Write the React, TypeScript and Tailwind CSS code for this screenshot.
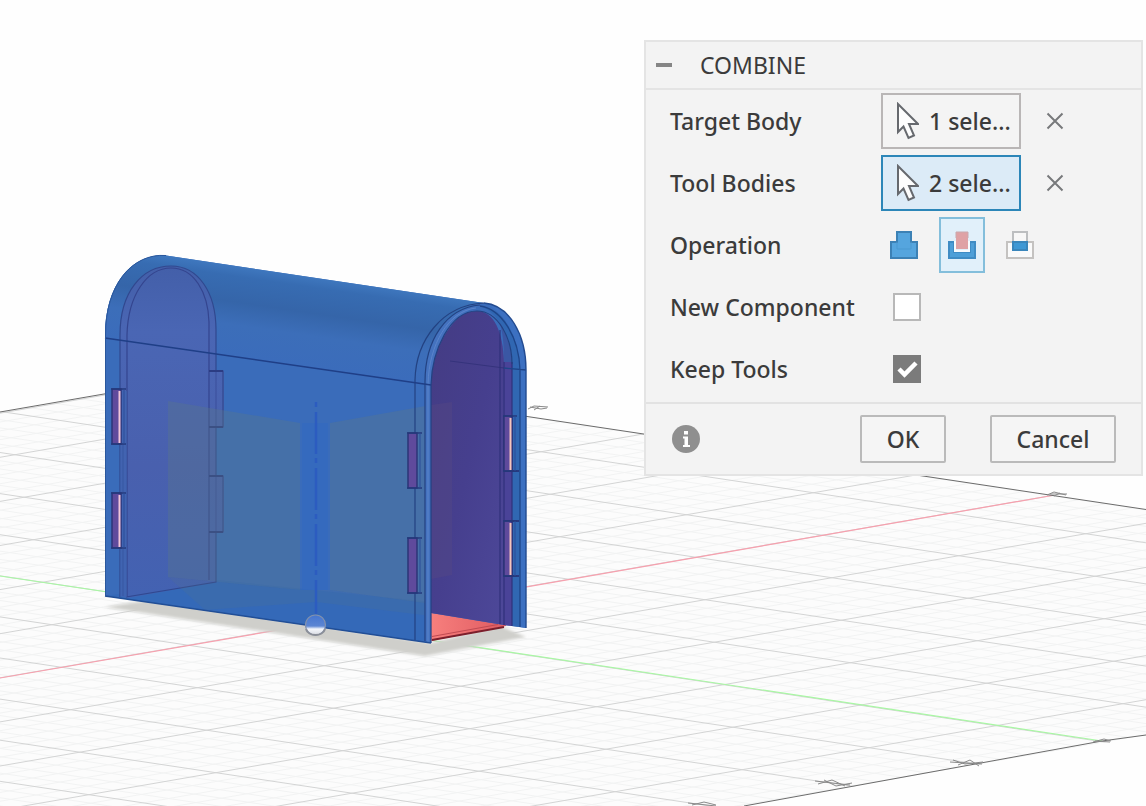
import { useState } from 'react'

const GRID = [-20, -19, -18, -17, -16, -15, -14, -13, -12, -11, -10, -9, -8, -7, -6, -5, -4, -3, -2, -1, 0, 1, 2, 3, 4, 5, 6, 7, 8, 9, 10, 11, 12]

// y of each grid line where it meets x = 0
const falling = (k: number) => 575.8 + 41.1 * k
const rising = (k: number) => 677.8 + 44.1 * k
const FALL = 172.5
const RISE = -198.6

function Grid() {
  return (
    <g clipPath="url(#floor)">
      <path d="M0 412 231 372 1146 509.5V735L744 806H0Z" fill="#fcfcfc" />
      <g stroke="#f2f3f3" strokeWidth="1">
        {GRID.map(k => [0.2, 0.4, 0.6, 0.8].map(f => (
          <g key={k + f}>
            <line x1="0" y1={falling(k + f)} x2="1146" y2={falling(k + f) + FALL} />
            <line x1="0" y1={rising(k + f)} x2="1146" y2={rising(k + f) + RISE} />
          </g>
        )))}
      </g>
      <g stroke="#d3d4d4" strokeWidth="1">
        {GRID.map(k => (
          <g key={k}>
            <line x1="0" y1={falling(k)} x2="1146" y2={falling(k) + FALL} />
            <line x1="0" y1={rising(k)} x2="1146" y2={rising(k) + RISE} />
          </g>
        ))}
      </g>
      <path d="M0 576 316 623 1102 741" stroke="#a9f7a4" strokeWidth="1.2" fill="none" />
      <path d="M0 678 316 623.5 1055 495" stroke="#f7a0ae" strokeWidth="1.2" fill="none" />
    </g>
  )
}

function Slot({ x, y, w = 9, h = 55, glow }: { x: number; y: number; w?: number; h?: number; glow?: string }) {
  return (
    <g>
      <rect x={x} y={y} width={w} height={h} fill="#5f4a9c" stroke="#2a3275" strokeWidth="1.4" />
      {glow && <path d={`M${x + w - 1.5} ${y + 2}v${h - 3}`} stroke={glow} strokeWidth="2" />}
      <path d={`M${x - 1} ${y}h${w + 6}M${x - 1} ${y + h}h${w + 6}`} stroke="#243a7c" strokeWidth="1.6" />
      <path d={`M${x + w + 3} ${y}v${h}`} stroke="#2b4d97" strokeWidth="1" />
    </g>
  )
}

function Model() {
  return (
    <g fill="none">
      <path d="M105 607 150 600 431 643 500 626 526 637 425 656Z" fill="#cfcfcb" filter="url(#soft)" />
      <path d="M431 612 506 622 506 626 431 641Z" fill="url(#pink)" />
      <path d="M432 640 504 627" stroke="#7c1f2c" strokeWidth="1.8" />
      <path d="M432 636.500 498 624.500" stroke="#c04a52" strokeWidth="1" />

      {/* shell */}
      <path d="M105 596V335C105 285 132 253 166 255.5L484 303C509 305 526 334 526 370V628L504 625 431 613V643Z" fill="#3a6cba" />
      <path d="M105 338V335C105 285 132 253 166 255.5L484 303C450 305 431 340 431 385Z" fill="url(#roof)" />
      <path d="M105 596 216 580 431 602V643Z" fill="#3168b8" opacity=".6" />

      {/* far end plate */}
      <path d="M120 596V335C120 292 142 266 170 266 197 266 214 290 216 325V371H224V427H216V476H224V532H216V582L128 598Z" fill="url(#plate)" />
      <path d="M120 390V335C120 292 142 266 171 266 198 266 216 292 216 330V371H223V427H209M216 427V476H223V532H209M216 532V582L126 597" stroke="#31488f" strokeWidth="1.2" />
      <path d="M127 597V335C128 295 147 268 171 268 194 268 208 292 209 322V580" stroke="#34458f" strokeWidth="1.2" />
      <path d="M216 371V427M216 476V532" stroke="#3a4e9b" strokeWidth="1" />
      <path d="M209 371H223M209 427H223M209 476H223M209 532H223" stroke="#2b3c83" strokeWidth="1.8" />
      <path d="M120 390V597M123 444V492M123 549V596" stroke="#31488f" strokeWidth="1.2" />
      <path d="M120 391H127V597H120Z" fill="#3d66b3" opacity=".6" />

      {/* origin planes seen through the body */}
      <path d="M168 401 300 423V590L168 577Z" fill="#5b7787" opacity=".34" />
      <path d="M330 423 431 405V604L330 590Z" fill="#5b7787" opacity=".36" />
      <path d="M168 577 300 590 330 590 431 604 431 616 316 602 205 610Z" fill="#5b7787" opacity=".18" />
      <path d="M302 423H328V590H302Z" fill="#3069c4" opacity=".45" />
      <path d="M316 402V614" stroke="#2c5cc0" strokeWidth="2.5" strokeDasharray="5 5 42 4" />

      {/* opening */}
      <path d="M431 613V385C432 350 450 311 477 311 494 311 503 332 504 362V625Z" fill="url(#inside)" />
      <path d="M431 405 452 402V575L431 579Z" fill="#5c4b80" opacity=".3" />
      <path d="M503 362H512V626L503 625Z" fill="#4a4398" />
      <path d="M498 318C508 330 512 345 512 362H504C504 345 503 330 498 318Z" fill="#3a57a4" />
      <path d="M512 626V364C511 340 500 313 480 306 504 308 520 335 520 370V627Z" fill="#3067b2" />
      <path d="M520 627V370C519 336 503 310 484 303 509 305 526 334 526 370V628Z" fill="#3c70c1" />
      <path d="M450 361 504 368" stroke="#35337c" strokeWidth="1" />
      <path d="M504 362V625M512 362V626M500 330V624" stroke="#2e2f78" strokeWidth="1.1" />
      <path d="M520 627V370C519 336 501 309 480 306M504 368 526 370" stroke="#1e4589" strokeWidth="1.3" />
      <path d="M504 471H519M504 521H519M504 576H519" stroke="#262c70" strokeWidth="1.3" />

      {/* near edge of the arch */}
      <path d="M425 641V382C425 340 446 308 480 306 454 312 432 345 431 385V643Z" fill="#4472bf" />
      <path d="M415 640V380C416 340 442 305 484 303M425 641V382C425 340 446 308 480 305M431 643V385C432 350 450 311 477 311 498 311 512 338 512 364" stroke="#234282" strokeWidth="1.2" />
      <path d="M428 642V384C429 345 448 311 476 308" stroke="#5a84ca" strokeWidth="1" />
      <path d="M105 338 431 385" stroke="#1f3f87" strokeWidth="1.4" />
      <path d="M484 303C509 305 526 334 526 370V628" stroke="#234b90" strokeWidth="1.4" />
      <path d="M105 596 431 643" stroke="#214e96" strokeWidth="1.4" />
      <path d="M105.5 596V335C105.5 285 132 253 166 255.5" stroke="#2a579c" strokeWidth="1" />

      <Slot x={112} y={389} glow="#f0c6d8" />
      <Slot x={112} y={493} glow="#f0c6d8" />
      <Slot x={408} y={433} />
      <Slot x={408} y={538} />
      <Slot x={504} y={416} w={8} glow="#f5c5bd" />
      <Slot x={504} y={521} w={8} glow="#f5c5bd" />

      <circle cx="315.5" cy="625" r="10" fill="url(#ball)" stroke="#8291ad" strokeWidth="1.2" />
      <path d="M306 629C308 637 323 637 325 629" stroke="#8b8f98" strokeWidth="2" />
    </g>
  )
}

function Scene() {
  return (
    <svg viewBox="0 0 1146 806" preserveAspectRatio="xMidYMid slice" className="absolute inset-0 h-full w-full" aria-hidden="true">
      <defs>
        <clipPath id="floor"><path d="M0 412 231 372 1146 509.5V735L744 806H0Z" /></clipPath>
        <filter id="soft"><feGaussianBlur stdDeviation="1.5" /></filter>
        <linearGradient id="roof" gradientUnits="userSpaceOnUse" x1="310" y1="276" x2="297" y2="366">
          <stop offset="0" stopColor="#3f78bf" />
          <stop offset=".12" stopColor="#376cb2" />
          <stop offset=".4" stopColor="#3565a9" />
          <stop offset=".65" stopColor="#3c6eb9" />
          <stop offset="1" stopColor="#3b6cbb" />
        </linearGradient>
        <linearGradient id="plate" x1="0" y1="0" x2="0" y2="1">
          <stop offset="0" stopColor="#435fa9" />
          <stop offset=".2" stopColor="#4a66b4" />
          <stop offset=".6" stopColor="#4960ae" />
          <stop offset="1" stopColor="#4362b2" />
        </linearGradient>
        <linearGradient id="inside" x1="0" y1="0" x2="1" y2="1">
          <stop offset="0" stopColor="#443c83" />
          <stop offset=".5" stopColor="#463f8e" />
          <stop offset="1" stopColor="#4d4899" />
        </linearGradient>
        <linearGradient id="pink" x1="0" y1="0" x2="1" y2="0">
          <stop offset="0" stopColor="#f77f7d" />
          <stop offset="1" stopColor="#df5b61" />
        </linearGradient>
        <linearGradient id="ball" x1="0" y1="0" x2="0" y2="1">
          <stop offset="0" stopColor="#4575cf" />
          <stop offset=".55" stopColor="#5c86d3" />
          <stop offset=".7" stopColor="#f4f6fb" />
          <stop offset="1" stopColor="#d8dbe2" />
        </linearGradient>
      </defs>
      <Grid />
      <g stroke="#6b6b6b" strokeWidth="1" fill="none">
        <path d="M0 412 231 372 1146 509.5M744 806 1102 741 1146 735" />
        {/* ruler marks, almost edge-on */}
        <g stroke="#8a8a8a">
          <path d="M528 409 534 406 548 407M530 407 541 409 547 408M534 410 540 406" />
          <path d="M1047 495 1054 492 1066 495M1050 494 1067 494M1054 496 1060 493" />
          <path d="M1093 742 1104 739 1111 741M1095 741 1110 742" />
          <path d="M950 762 982 764M953 760 965 764 983 762M958 765 970 760 979 766" />
          <path d="M815 781 850 785M818 784 832 780 845 786M824 780 836 786 852 783" />
          <path d="M688 803 716 806M692 805 704 802 716 805" />
        </g>
      </g>
      <Model />
    </svg>
  )
}

function Cursor() {
  return (
    <svg width="24" height="38" viewBox="0 0 24 38" className="shrink-0" aria-hidden="true">
      <path d="M3 2V30L8.500 24.500 13.500 36 19 33.500 14 22H23Z" fill="#fdfdfd" stroke="#66696e" strokeWidth="2" />
    </svg>
  )
}

function Selection({ id, label, text, active, onFocus }: { id: string; label: string; text: string; active: boolean; onFocus: () => void }) {
  return (
    <div className="flex h-[62px] items-center">
      <label htmlFor={id} className="w-[211px] shrink-0">{label}</label>
      <button
        id={id}
        onClick={onFocus}
        className={`flex h-14 w-[140px] items-center gap-2.5 whitespace-nowrap border-2 pl-3 ${active ? 'border-[#2c86b8] bg-[#dcebf7]' : 'border-[#b9b6b6] bg-[#f4f4f4]'}`}
      >
        <Cursor />
        {text}
      </button>
      <button aria-label={`Clear ${label}`} className="ml-6 flex size-5 items-center justify-center">
        <svg width="18" height="18" viewBox="0 0 18 18" aria-hidden="true">
          <path d="M1.5 1.5 16.5 16.5M16.5 1.5 1.5 16.5" stroke="#77797b" strokeWidth="2" />
        </svg>
      </button>
    </div>
  )
}

const OPERATIONS = [
  {
    name: 'Join',
    icon: (
      <>
        <path d="M7 1H21V11H27V27H1V11H7Z" fill="#55a5de" stroke="#3c81b5" strokeWidth="2" />
        <path d="M7 11V18H21V11" fill="none" stroke="#4a99d1" strokeWidth="1" />
      </>
    ),
  },
  {
    name: 'Cut',
    icon: (
      <>
        <path d="M1 11H6V21H22V11H27V27H1Z" fill="#4d9fd8" stroke="#3f8cc4" strokeWidth="2" />
        <path d="M7 10V20H21V10" fill="none" stroke="#f7fbfe" strokeWidth="2" />
        <path d="M8 1H20V18H8Z" fill="#dfa2a5" />
        <path d="M8 7V1H20V7" fill="none" stroke="#c9a9ae" strokeWidth="1" />
      </>
    ),
  },
  {
    name: 'Intersect',
    icon: (
      <>
        <path d="M1 11H27V27H1Z" fill="#fafafa" stroke="#c4c2c0" strokeWidth="2" />
        <path d="M7 1H21V11H7Z" fill="#f7f7f7" stroke="#bcbec0" strokeWidth="2" />
        <path d="M7 11H21V19H7Z" fill="#3f98d4" stroke="#3a86bb" strokeWidth="2" />
      </>
    ),
  },
]

function Tick({ id, label, checked, onChange }: { id: string; label: string; checked: boolean; onChange: (v: boolean) => void }) {
  return (
    <div className="flex h-[62px] items-center">
      <label htmlFor={id} className="w-[223px] shrink-0">{label}</label>
      <span className="relative flex size-7">
        <input
          id={id}
          type="checkbox"
          checked={checked}
          onChange={e => onChange(e.target.checked)}
          className="size-7 appearance-none border-2 border-[#b8b8b8] bg-white checked:border-[#7b7b7b] checked:bg-[#7b7b7b]"
        />
        {checked && (
          <svg viewBox="0 0 28 28" className="pointer-events-none absolute inset-0" aria-hidden="true">
            <path d="M6 14 11.5 19.500 23 8" fill="none" stroke="#fff" strokeWidth="4.5" />
          </svg>
        )}
      </span>
    </div>
  )
}

function CombinePanel() {
  const [field, setField] = useState('tool')
  const [op, setOp] = useState('Cut')
  const [newComponent, setNewComponent] = useState(false)
  const [keepTools, setKeepTools] = useState(true)

  return (
    <section className="relative w-full max-w-[499px] border-2 border-[#e4e4e4] bg-[#f3f3f3]">
      <header className="flex h-12 items-center border-b-2 border-[#e4e4e4] pl-[10px]">
        <button aria-label="Collapse" className="flex h-6 w-11 items-center">
          <span className="h-1 w-4 bg-[#858585]" />
        </button>
        <h1 className="font-normal">COMBINE</h1>
      </header>

      <div className="border-b-2 border-[#e2e2e2] pb-0.5 pl-6">
        <Selection id="target" label="Target Body" text="1 sele..." active={field === 'target'} onFocus={() => setField('target')} />
        <Selection id="tool" label="Tool Bodies" text="2 sele..." active={field === 'tool'} onFocus={() => setField('tool')} />
        <div className="flex h-[62px] items-center">
          <span id="operation" className="w-[211px] shrink-0">Operation</span>
          <div role="group" aria-labelledby="operation" className="flex gap-3">
            {OPERATIONS.map(o => (
              <button
                key={o.name}
                aria-label={o.name}
                aria-pressed={op === o.name}
                onClick={() => setOp(o.name)}
                className={`flex h-14 w-[46px] items-center justify-center border-2 ${op === o.name ? 'border-[#83bedb] bg-[#e1f0fa]' : 'border-transparent'}`}
              >
                <svg width="28" height="28" viewBox="0 0 28 28" className="shrink-0" aria-hidden="true">{o.icon}</svg>
              </button>
            ))}
          </div>
        </div>
        <Tick id="new-component" label="New Component" checked={newComponent} onChange={setNewComponent} />
        <Tick id="keep-tools" label="Keep Tools" checked={keepTools} onChange={setKeepTools} />
      </div>

      <footer className="flex h-[70px] items-center pl-[26px] pr-[25px]">
        <button aria-label="Info" className="mr-auto">
          <svg width="28" height="28" viewBox="0 0 28 28" aria-hidden="true">
            <circle cx="14" cy="14" r="14" fill="#8f8f8f" />
            <path d="M12 6H16V9.5H12ZM11 11.5H16V20H18V22H11V20H12.5V13.5H11Z" fill="#fff" />
          </svg>
        </button>
        <button className="h-12 w-[86px] rounded-xs border-2 border-[#bababa] bg-[#f5f5f5]">OK</button>
        <button className="ml-11 h-12 w-[126px] rounded-xs border-2 border-[#bababa] bg-[#f5f5f5]">Cancel</button>
      </footer>
    </section>
  )
}

export default function App() {
  return (
    <main className="relative flex min-h-screen items-start justify-end overflow-hidden bg-[#fefefe] pr-[3px] pt-10 font-['Noto_Sans',sans-serif] text-[23px] font-medium text-[#3b3b3b]">
      <Scene />
      <CombinePanel />
    </main>
  )
}
